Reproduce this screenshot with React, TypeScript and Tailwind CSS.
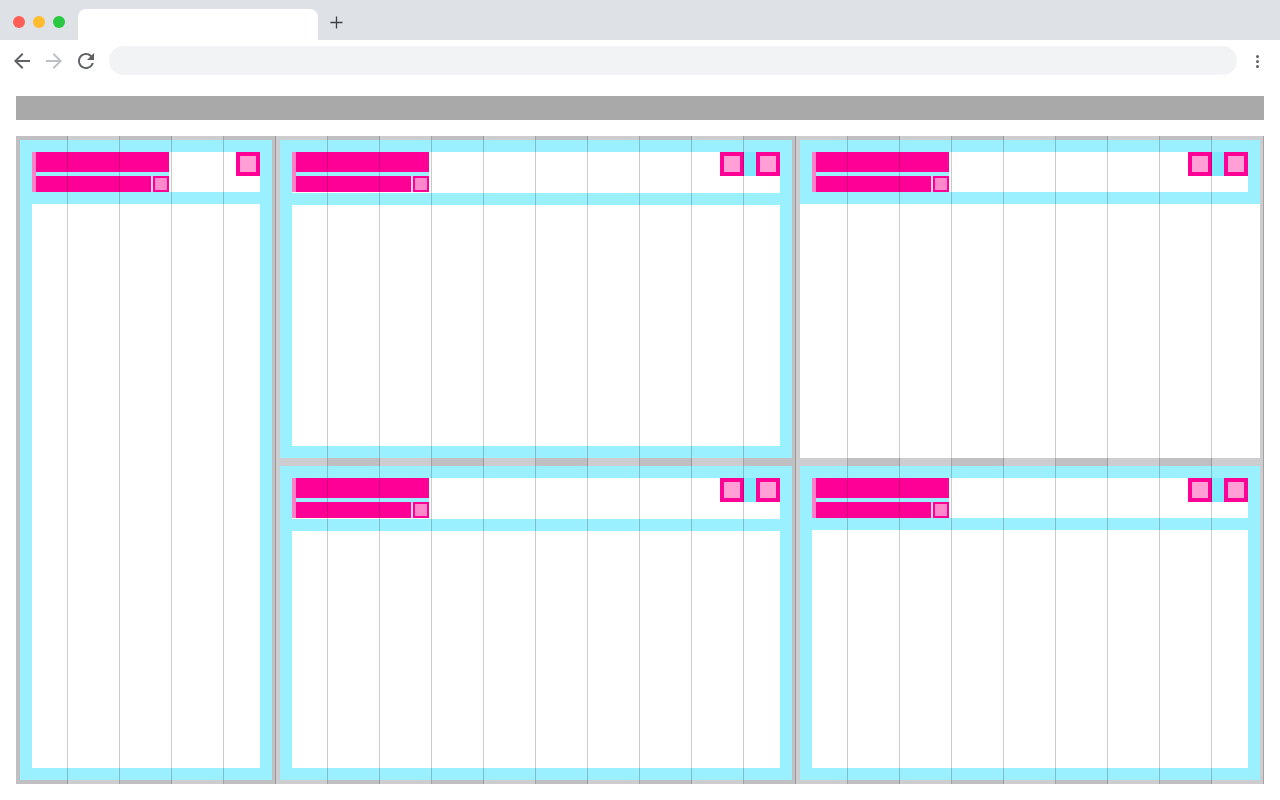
import React from "react";

function Square() {
  return <div className="h-6 w-6 border-4 border-[#ff0096] bg-[#ff9fd6]" />;
}

function Header({ h, two }: { h: string; two?: boolean }) {
  return (
    <div className={`flex shrink-0 justify-between bg-white ${h}`}>
      <div className="flex h-10">
        <div className="w-1 bg-[#ff80c8]" />
        <div className="flex w-[133px] flex-col gap-1 bg-[#9af0fe]">
          <div className="h-5 bg-[#ff0096]" />
          <div className="flex h-4 bg-[#ffd0ea]">
            <div className="flex-1 bg-[#ff0096]" />
            <div className="ml-[2px] h-4 w-4 border-2 border-[#ff0096] bg-[#ff88cc]" />
          </div>
        </div>
      </div>
      <div className="flex items-start">
        {two && (
          <>
            <Square />
            <div className="h-6 w-3 bg-[#7ee8fc]" />
          </>
        )}
        <Square />
      </div>
    </div>
  );
}

function Panel({ className = "", h, two, flush }: { className?: string; h: string; two?: boolean; flush?: boolean }) {
  return (
    <div className={`flex flex-col bg-[#9af0fe] p-3 ${className}`}>
      <Header h={h} two={two} />
      <div className={`mt-3 flex-1 bg-white ${flush ? "-mx-3 -mb-3" : ""}`} />
    </div>
  );
}

function BrowserChrome() {
  return (
    <div>
      <div className="flex h-10 items-start bg-[#dee1e6]">
        <div className="ml-[13px] mt-4 flex gap-2">
          <span className="h-3 w-3 rounded-full bg-[#ff5f57]" />
          <span className="h-3 w-3 rounded-full bg-[#febc2e]" />
          <span className="h-3 w-3 rounded-full bg-[#28c840]" />
        </div>
        <div className="ml-[13px] mt-[9px] h-[31px] w-[240px] rounded-t-lg bg-white" />
        <svg className="ml-3 mt-4" width="13" height="13" viewBox="0 0 13 13">
          <path d="M6.5 0.5v12M0.5 6.5h12" stroke="#3c4043" strokeWidth="1.3" fill="none" />
        </svg>
      </div>
      <div className="flex h-12 items-start bg-white">
        <div className="ml-[10px] mt-[9px] flex gap-2">
          <svg width="24" height="24" viewBox="0 0 24 24">
            <path fill="#5f6368" d="M20 11H7.83l5.59-5.59L12 4l-8 8 8 8 1.41-1.41L7.83 13H20v-2z" />
          </svg>
          <svg width="24" height="24" viewBox="0 0 24 24">
            <path fill="#bdc1c6" d="M12 4l-1.41 1.41L16.17 11H4v2h12.17l-5.58 5.59L12 20l8-8z" />
          </svg>
          <svg width="24" height="24" viewBox="0 0 24 24">
            <path
              fill="#5f6368"
              d="M17.65 6.35A7.958 7.958 0 0 0 12 4c-4.42 0-7.99 3.58-7.99 8s3.57 8 7.99 8c3.73 0 6.84-2.55 7.73-6h-2.08A5.99 5.99 0 0 1 12 18c-3.31 0-6-2.69-6-6s2.69-6 6-6c1.66 0 3.14.69 4.22 1.78L13 11h7V4l-2.35 2.35z"
            />
          </svg>
        </div>
        <div className="ml-[11px] mt-[6px] h-[29px] flex-1 rounded-full bg-[#f1f3f4]" />
        <div className="ml-[19px] mr-[21px] mt-[15px] flex flex-col gap-[2px]">
          <span className="h-[3px] w-[3px] rounded-full bg-[#5f6368]" />
          <span className="h-[3px] w-[3px] rounded-full bg-[#5f6368]" />
          <span className="h-[3px] w-[3px] rounded-full bg-[#5f6368]" />
        </div>
      </div>
    </div>
  );
}

export default function App() {
  return (
    <div className="h-[800px] w-[1280px] overflow-hidden bg-white font-['Liberation_Sans',sans-serif]">
      <BrowserChrome />
      <div className="px-4 pt-2">
        <div className="h-6 bg-[#a9a9aa]" />
        <div className="relative mt-4 grid grid-cols-[252px_512px_460px] grid-rows-[318px_314px] gap-2 bg-[repeating-linear-gradient(90deg,#c0c0c2_0px,#c0c0c2_52px,#cdcdcf_52px,#cdcdcf_104px)] p-1">
          <Panel className="row-span-2" h="h-10" />
          <Panel h="h-[41px]" two />
          <Panel h="h-10" two flush />
          <Panel h="h-[41px]" two />
          <Panel h="h-10" two />
          {/* column overlay */}
          <div className="pointer-events-none absolute inset-0 grid grid-cols-[repeat(24,52px)]">
            {Array.from({ length: 24 }).map((_, i) => (
              <div key={i} className="border-r border-black/20" />
            ))}
          </div>
        </div>
      </div>
    </div>
  );
}
